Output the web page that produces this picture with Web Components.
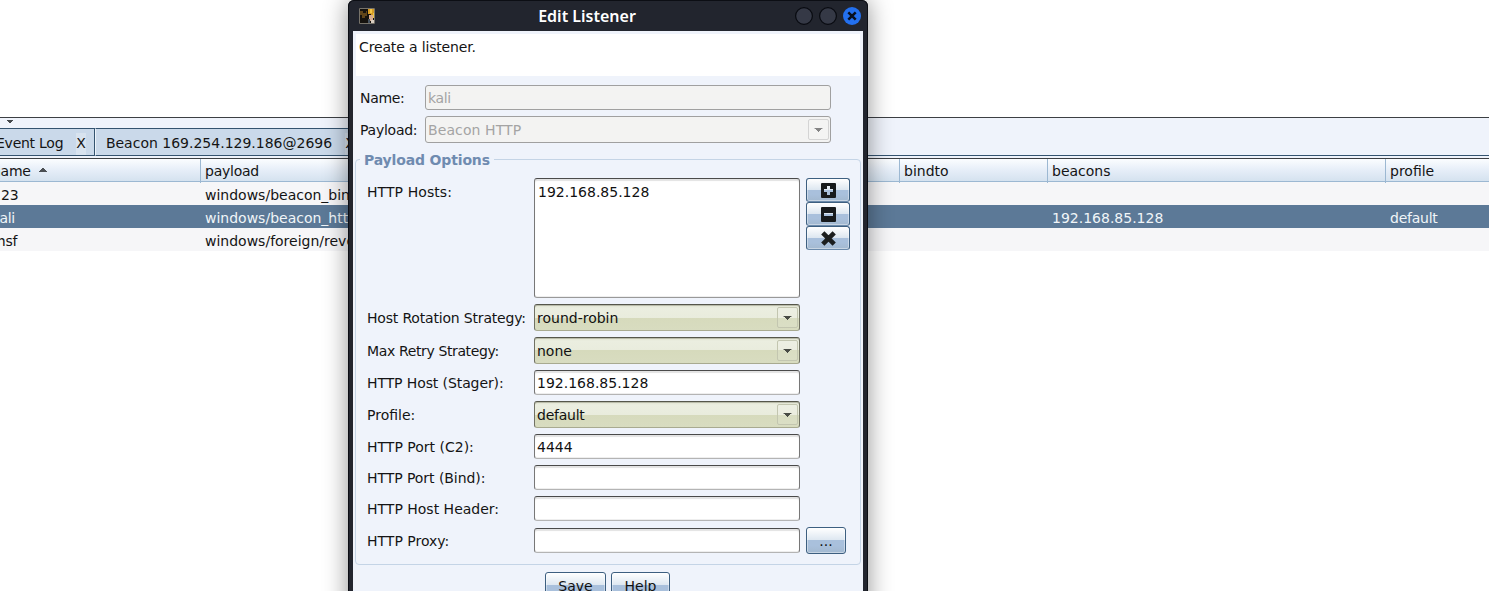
<!DOCTYPE html>
<html lang="en">
<head>
<meta charset="utf-8">
<title>Edit Listener</title>
<style>
html,body{margin:0;height:100%;overflow:hidden;background:#fff}
body{font:14px/20px "DejaVu Sans",sans-serif;color:#141414}
</style>
</head>
<body>
<listener-app></listener-app>
<script>
const define = (name, css, html, setup) => {
  const tpl = document.createElement('template');
  tpl.innerHTML = `<style>*{box-sizing:border-box}:host{box-sizing:border-box}${css}</style>${html}`;
  customElements.define(name, class extends HTMLElement {
    constructor() {
      super();
      this.attachShadow({mode: 'open'}).append(tpl.content.cloneNode(true));
    }
    connectedCallback() { if (setup) setup(this, this.shadowRoot); }
  });
};

define('tab-item', `
:host{display:flex;height:28px;border:1px solid #34536f;border-left-color:#eef4fb;border-right-color:#34536f;background:#cad9ea;padding:4px 8px 0 10px;line-height:20px;white-space:nowrap;flex:none}
b{font-weight:400;letter-spacing:0;margin-left:13px;background:#d8e3ef;line-height:20px}`,
`<slot></slot><b>X</b>`);

define('tab-strip', `
:host{display:block;height:41px;border-top:1px solid #3c3f43;background:#eff3fb;overflow:hidden}
.grip{height:10px;padding:2px 0 0 6px}
svg{display:block}
.tabs{display:flex;margin-left:-15px;box-shadow:inset 0 -1px #34536f}`,
`<div class="grip"><svg width="8" height="4"><path d="M1 0h6v1H6v1H5v1H3V2H2V1H1z" fill="#44484c"/></svg></div><div class="tabs"><slot></slot></div>`);

define('table-row', `
:host{display:grid;grid-template-columns:var(--cols);height:23px;line-height:26px;background:#f6f6f8;white-space:nowrap}
:host([header]){height:24px;line-height:24px;border-top:1px solid #3c3f43;border-bottom:1px solid #9cb8d2;background:linear-gradient(#fbfdff,#e6eef8 50%,#d5e2ef)}
:host([selected]){background:#5c7997;color:#f0f5f8}
::slotted(span){padding-left:5px}
:host([header]) ::slotted(span){padding-left:4px;border-left:1px solid #9cb8d2}`, `<slot></slot>`);

define('sort-mark', `:host{display:inline-block;margin-left:8px;vertical-align:4px;line-height:0}`,
`<svg width="8" height="4"><path d="M3 0h2v1h1v1h1v1h1v1H0V3h1V2h1V1h1z" fill="#4b4f53"/></svg>`);

define('listener-table', `:host{display:block;--cols:213px 699px 148px 338px 120px;margin-left:-13px;margin-top:-1px}.t{letter-spacing:-.25px}`, `
<table-row header><span class="t">name<sort-mark></sort-mark></span><span class="t">payload</span><span>bindto</span><span>beacons</span><span>profile</span></table-row>
<table-row><span>123</span><span>windows/beacon_bind_tcp</span></table-row>
<table-row selected><span class="t" style="letter-spacing:-.4px">kali</span><span>windows/beacon_http/reverse_http</span><span></span><span>192.168.85.128</span><span class="t">default</span></table-row>
<table-row><span class="t">msf</span><span>windows/foreign/reverse_http</span></table-row>`);

define('text-field', `
:host{display:block;height:25px;border:1px solid #777;border-top:1px solid #4a4a4a;border-bottom-color:#b4b4b4;border-radius:3px;background:#fff;box-shadow:inset 0 2px 1px #e3e3e3,inset 0 -1px #eee;line-height:25px;padding-left:2px;white-space:nowrap;color:#111}
:host([disabled]){background:#f3f3f2;border-color:#a0a0a0;box-shadow:none;color:#a4a4a4}
:host([area]){height:120px;line-height:26px;padding-left:3px;border-bottom-color:#999}`, `<slot></slot>`);

define('combo-box', `
:host{display:flex;justify-content:space-between;height:27px;border:1px solid #707163;border-top:1px solid #55564a;border-bottom-color:#a8aa90;border-radius:3px;background:linear-gradient(#dfe2cf 0,#ebeee0 3px,#e9ecdd 50%,#d6dabc 50%,#d8dcc0 100%);box-shadow:inset 0 1px #b9bba9;line-height:26px;padding:3px 1px 2px 2px;white-space:nowrap;color:#111}
:host([disabled]){background:#f3f3f2;border-color:#a0a0a0;box-shadow:none;color:#a4a4a4;--arrow:#858585}
span{margin-top:-3px}
i{display:flex;align-items:center;justify-content:center;width:21px;height:21px;margin-top:-1px;padding-top:1px;border:1px solid #c3c6b0;border-radius:2px;background:#ffffff18}
:host([disabled]) i{border-color:#d4d4d4}`,
`<span><slot></slot></span><i><svg width="9" height="4"><path d="M1 0h7v1H7v1H6v1H5v1H4V3H3V2H2V1H1z" fill="var(--arrow,#484b45)"/><path d="M0 0h9v1H0z" fill="var(--arrow,#484b45)" opacity=".4"/></svg></i>`);

define('push-button', `
:host{display:flex;justify-content:center;border:1px solid #3d5f80;border-radius:3px;background:linear-gradient(#fff,#dce6f0 50%,#a9c0dc 50%,#a9c0dc 70%,#a3b9d0);box-shadow:inset 0 0 0 1px #ffffff66;line-height:28px;height:27px;color:#111;align-items:center}
:host([icon]){height:24px;line-height:0;border-bottom-color:#6b8aab}`, `<slot></slot>`);

define('tool-icon', `:host{display:block;line-height:0}`, `<svg width="15" height="15" viewBox="0 0 15 15"></svg>`, (el, root) => {
  const box = 'M1 0h13q1 0 1 1v13q0 1-1 1H1q-1 0-1-1V1q0-1 1-1z';
  const shapes = {
    plus: `<path fill="#171a1c" fill-rule="evenodd" d="${box}M6 3v3H3v3h3v3h3V9h3V6H9V3z"/>`,
    minus: `<path fill="#171a1c" fill-rule="evenodd" d="${box}M3 6v3h9V6z"/>`,
    cross: `<path stroke="#1b1e1f" stroke-width="4.6" d="M1.8 1.8l11.4 11.4M13.2 1.8L1.8 13.2"/>`
  };
  root.querySelector('svg').innerHTML = shapes[el.getAttribute('kind')];
});

define('form-row', `
:host{display:grid;grid-template-columns:var(--label,167px) var(--field,266px) auto;margin-bottom:6px}
label{line-height:28px;white-space:nowrap;height:24px;letter-spacing:var(--ls,0)}
:host([low]) label{line-height:26px}
.side{margin-left:6px}`, `<label></label><slot></slot><div class="side"><slot name="side"></slot></div>`,
(el, root) => { root.querySelector('label').textContent = el.getAttribute('label'); });

define('options-group', `
:host{display:block;margin:8px 2px 0;height:414px}
fieldset{display:block;min-width:0;height:100%;margin:0;padding:0 0 0 11px;border:1px solid #c4d4e6;border-radius:4px}
legend{margin-left:-7px;padding:0 4px;font-weight:700;letter-spacing:-.15px;line-height:18px;height:16px;color:#6f8bb0}
.in{padding-top:11px}`, `<fieldset><legend>Payload Options</legend><div class="in"><slot></slot></div></fieldset>`);

define('title-bar', `
:host{display:grid;grid-template-columns:34px 1fr 80px;height:31px;align-items:center;color:#fff;padding:1px 2px 0 6px;font:600 16px/30px "Noto Sans",sans-serif;text-align:center}
.app{justify-self:start;display:block;margin-left:5px}
.wm{display:flex;gap:6px;justify-content:end;padding-right:5px}`, `
<svg class="app" width="16" height="16"><path fill="#15120e" d="M0 0h16v16H0z"/><path fill="#60451a" d="M1 3h3v2h3V3h1v5H6v2H3V7H1z"/><path fill="#d59b24" d="M9 1h6v9h-3V6H9z"/><path fill="#f3c647" d="M11 1h2v4h-2zM14 5h1v5h-1z"/><path fill="#d8ac90" d="M10 7h4v6h-3v-2h-1z"/><path fill="#465260" d="M9 11h2v4H9z"/><path fill="#d9cdc1" d="M12 12h3v3h-3z"/><path fill="none" stroke="#77736a" d="M.5 .5h15v15H.5z"/></svg>
<span><slot></slot></span>
<div class="wm">
<svg width="18" height="18"><circle cx="9" cy="9" r="8.4" fill="#353946" stroke="#080a10" stroke-width="1.2"/></svg>
<svg width="18" height="18"><circle cx="9" cy="9" r="8.4" fill="#353946" stroke="#080a10" stroke-width="1.2"/></svg>
<svg width="18" height="18"><circle cx="9" cy="9" r="9" fill="#2370ef"/><path d="M5.3 5.3l7.4 7.4M12.7 5.3l-7.4 7.4" stroke="#081020" stroke-width="2.5"/></svg>
</div>`);

define('dialog-window', `
:host{position:absolute;left:348px;top:0;width:520px;height:640px;background:#22252e;border-radius:6px 6px 0 0;box-shadow:inset 0 0 0 1px #0c0e14,0 0 24px rgba(0,0,0,.43)}
.body{margin:0 5px;height:609px;background:#eff3fb;padding-top:3px}`, `<title-bar>Edit Listener</title-bar><div class="body"><slot></slot></div>`);

define('listener-app', `
:host{display:block;position:relative;height:591px;overflow:hidden;padding-top:117px}
.note{height:42px;margin:0 3px;background:#fff;padding:3px;line-height:20px;letter-spacing:-.15px}
.top{--label:65px;--field:406px;margin:9px 0 0 7px}
.icons{display:block;width:44px;height:72px}
.actions{display:flex;gap:5px;margin:7px 0 0 192px}`, `
<tab-strip><tab-item style="letter-spacing:-.25px">Event Log</tab-item><tab-item>Beacon 169.254.129.186@2696</tab-item></tab-strip>
<div style="height:1px"></div>
<listener-table></listener-table>
<dialog-window>
<div class="note">Create a listener.</div>
<div class="top">
<form-row low label="Name:" style="--ls:-.3px"><text-field disabled style="letter-spacing:-.4px">kali</text-field></form-row>
<form-row label="Payload:" style="margin:0;--ls:-.25px"><combo-box disabled style="letter-spacing:.1px">Beacon HTTP</combo-box></form-row>
</div>
<options-group>
<form-row label="HTTP Hosts:" style="--ls:.08px"><text-field area>192.168.85.128</text-field><div slot="side" class="icons"><push-button icon><tool-icon kind="plus"></tool-icon></push-button><push-button icon><tool-icon kind="minus"></tool-icon></push-button><push-button icon><tool-icon kind="cross"></tool-icon></push-button></div></form-row>
<form-row label="Host Rotation Strategy:" style="--ls:-.18px"><combo-box>round-robin</combo-box></form-row>
<form-row label="Max Retry Strategy:" style="--ls:-.37px"><combo-box>none</combo-box></form-row>
<form-row low label="HTTP Host (Stager):" style="--ls:-.1px"><text-field>192.168.85.128</text-field></form-row>
<form-row label="Profile:"><combo-box style="letter-spacing:-.25px">default</combo-box></form-row>
<form-row low label="HTTP Port (C2):"><text-field>4444</text-field></form-row>
<form-row low label="HTTP Port (Bind):" style="--ls:-.06px"><text-field></text-field></form-row>
<form-row low label="HTTP Host Header:"><text-field></text-field></form-row>
<form-row label="HTTP Proxy:"><text-field style="margin-top:1px"></text-field><push-button slot="side" style="width:40px">...</push-button></form-row>
</options-group>
<div class="actions"><push-button style="width:61px">Save</push-button><push-button style="width:59px">Help</push-button></div>
</dialog-window>`);
</script>
</body>
</html>
